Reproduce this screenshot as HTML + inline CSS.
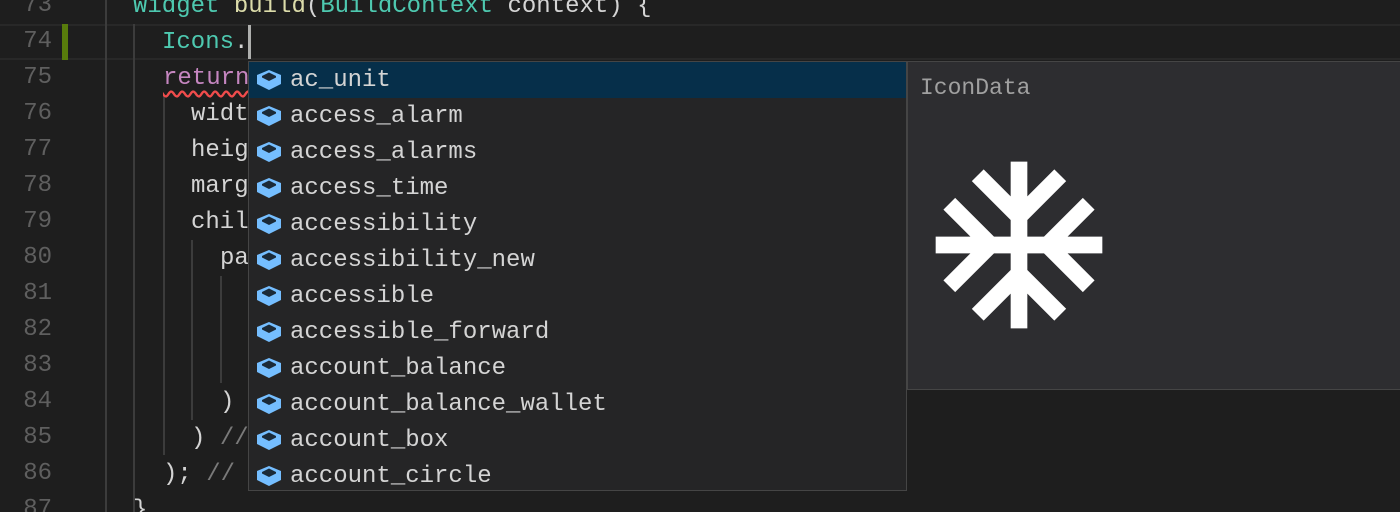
<!DOCTYPE html>
<html style="height:512px;overflow:hidden"><head><style>
body{margin:0;width:1400px;height:512px;background:#1e1e1e;overflow:hidden;position:relative;font-family:"Liberation Mono",monospace;font-size:24px;}
.ln{position:absolute;left:0;width:52px;text-align:right;color:#5f5f5f;height:36px;line-height:36px;}
.c{position:absolute;height:36px;line-height:38px;color:#d4d4d4;white-space:pre;}
.g{position:absolute;width:2px;background:#3c3c3c;}
.pop{position:absolute;left:248px;top:61px;width:657px;height:428px;background:#252526;border:1px solid #454545;overflow:hidden}
.row{position:relative;height:36px;line-height:38px;color:#d4d4d4;padding-left:41px;}
.row svg{position:absolute;left:7px;top:7px;}
.sel{background:#062f4a;}
.det{position:absolute;left:907px;top:61px;width:493px;height:327px;background:#2d2d30;border-top:1px solid #454545;border-bottom:1px solid #454545;border-left:1px solid #454545;}
.cm{color:#7a7a7a}
</style></head><body>
<div style="position:absolute;left:0;top:24px;width:1400px;height:36px;box-sizing:border-box;border-top:2px solid #282828;border-bottom:2px solid #282828;"></div>
<div style="position:absolute;left:62px;top:24px;width:6px;height:36px;background:#587c0c"></div>
<div class="g" style="left:105px;top:0;height:512px"></div>
<div class="g" style="left:133px;top:24px;height:488px"></div>
<div class="g" style="left:163px;top:96px;height:359px"></div>
<div class="g" style="left:191px;top:240px;height:180px"></div>
<div class="g" style="left:220px;top:276px;height:107px"></div>
<div class="ln" style="top:-12px">73</div><div class="ln" style="top:24px">74</div><div class="ln" style="top:60px">75</div><div class="ln" style="top:96px">76</div><div class="ln" style="top:132px">77</div><div class="ln" style="top:168px">78</div><div class="ln" style="top:204px">79</div><div class="ln" style="top:240px">80</div><div class="ln" style="top:276px">81</div><div class="ln" style="top:312px">82</div><div class="ln" style="top:348px">83</div><div class="ln" style="top:384px">84</div><div class="ln" style="top:420px">85</div><div class="ln" style="top:456px">86</div><div class="ln" style="top:492px">87</div>
<div class="c" style="left:133px;top:-12px"><span style="color:#4ec9b0">Widget</span> <span style="color:#dcdcaa">build</span>(<span style="color:#4ec9b0">BuildContext</span> context) {</div>
<div class="c" style="left:162px;top:24px"><span style="color:#4ec9b0">Icons</span>.</div>
<div style="position:absolute;left:248px;top:25px;width:3px;height:34px;background:#aeafad"></div>
<div class="c" style="left:163px;top:60px;color:#c586c0;text-decoration:underline wavy #f14c4c;text-underline-offset:6px">return</div>
<div class="c" style="left:191px;top:96px">width</div>
<div class="c" style="left:191px;top:132px">height</div>
<div class="c" style="left:191px;top:168px">margin</div>
<div class="c" style="left:191px;top:204px">child</div>
<div class="c" style="left:220px;top:240px">pad</div>
<div class="c" style="left:220px;top:384px">)</div>
<div class="c" style="left:191px;top:420px">) <span class="cm">//</span></div>
<div class="c" style="left:163px;top:456px">); <span class="cm">//</span></div>
<div class="c" style="left:133px;top:492px">}</div>
<div class="pop">
<div class="row sel">ac_unit</div>
<div class="row">access_alarm</div>
<div class="row">access_alarms</div>
<div class="row">access_time</div>
<div class="row">accessibility</div>
<div class="row">accessibility_new</div>
<div class="row">accessible</div>
<div class="row">accessible_forward</div>
<div class="row">account_balance</div>
<div class="row">account_balance_wallet</div>
<div class="row">account_box</div>
<div class="row">account_circle</div>
</div>
<div class="det">
<div style="position:absolute;left:12px;top:13px;color:#a0a0a0;font-size:23px;">IconData</div>
<svg style="position:absolute;left:11px;top:83px" width="200" height="200" viewBox="0 0 24 24"><path fill="#fff" d="M22 11h-4.17l3.24-3.24-1.41-1.42L15 11h-2V9l4.66-4.66-1.42-1.41L13 6.17V2h-2v4.170L7.76 2.93 6.34 4.34 11 9v2H9L4.34 6.34 2.93 7.76 6.17 11H2v2h4.17l-3.24 3.24 1.41 1.42L9 13h2v2l-4.66 4.66 1.42 1.41L11 17.83V22h2v-4.17l3.24 3.24 1.42-1.42L13 15v-2h2l4.66 4.66 1.41-1.42L17.83 13H22z"/></svg>
</div>
<script>
document.querySelectorAll('.row').forEach(r=>{r.insertAdjacentHTML('afterbegin','<svg width="26" height="22" viewBox="0 0 26 22"><path d="M13 1 L25 6 L25 15 L13 21 L1 15 L1 6 Z" fill="#75beff"/><path d="M6 7 L13 3.5 L20 7 L20 8.5 L13 12 L6 8.5 Z" fill="#1b2a38"/></svg>')});
</script>
</body></html>
